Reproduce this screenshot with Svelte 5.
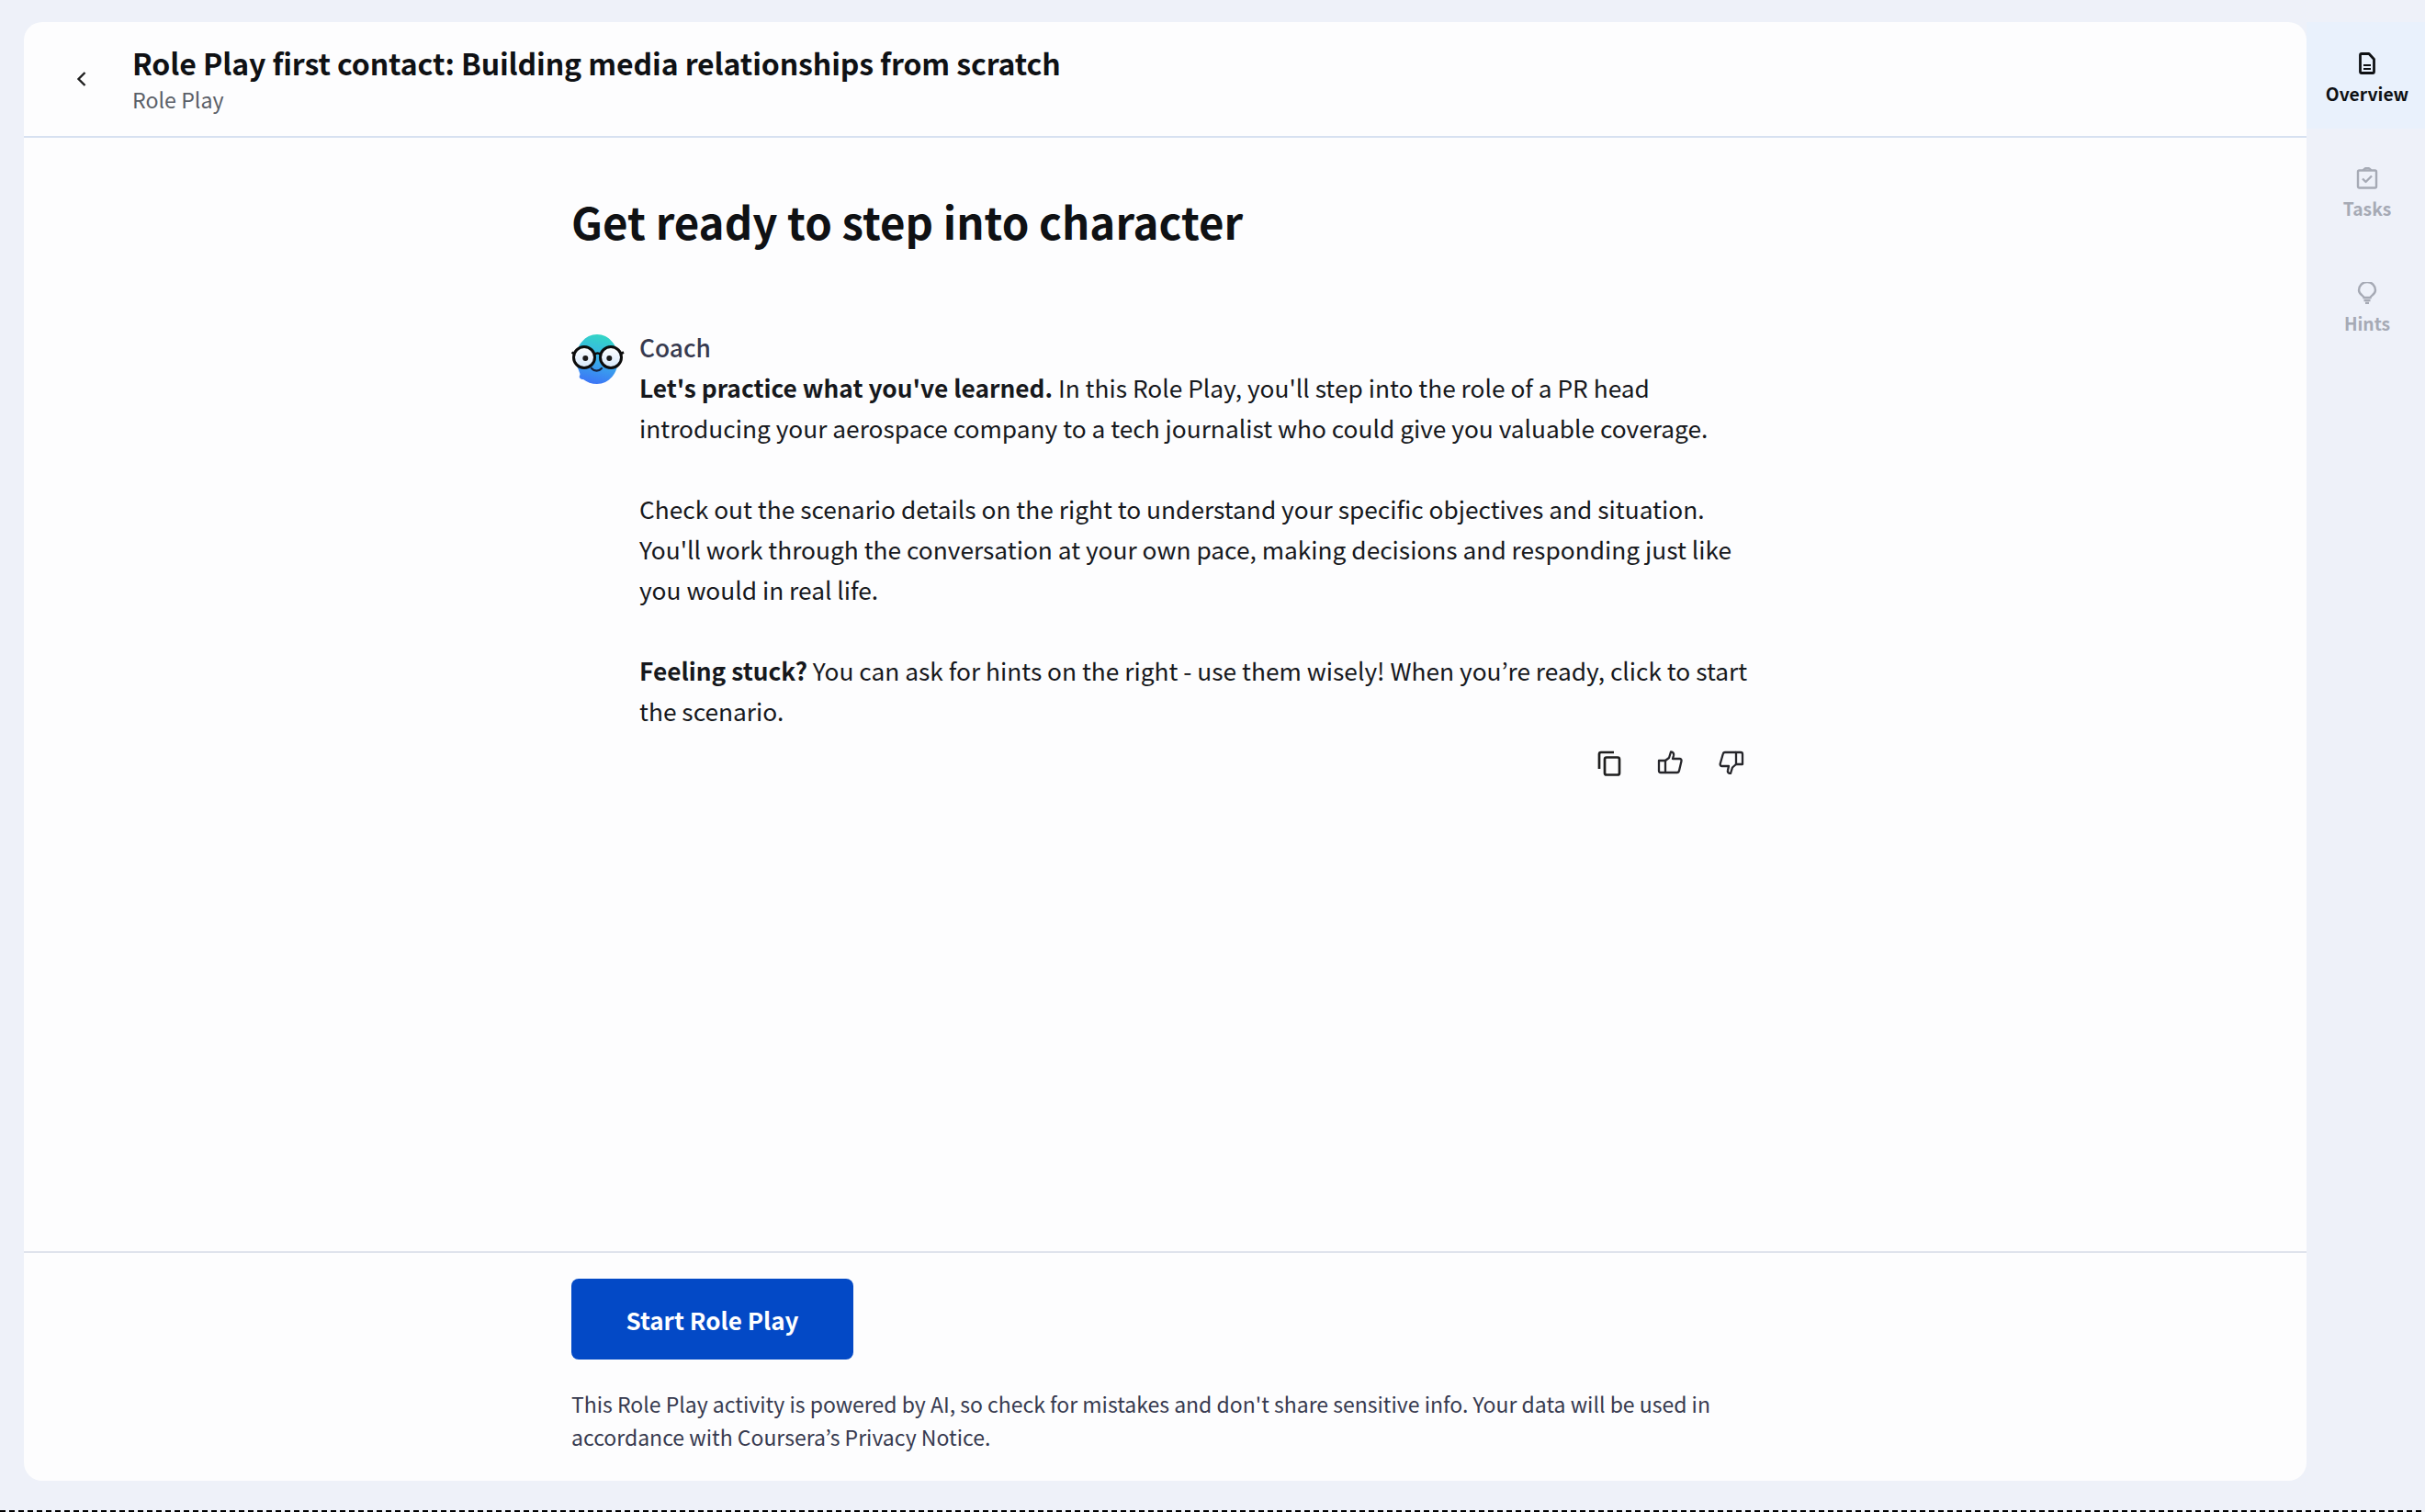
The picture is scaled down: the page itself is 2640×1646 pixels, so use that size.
<script>
  const tabs = [
    { id: "overview", label: "Overview", active: true },
    { id: "tasks", label: "Tasks", active: false },
    { id: "hints", label: "Hints", active: false }
  ];
</script>

<div class="page">
  <div class="shell">
    <div class="card">
      <header class="top">
        <button class="back" aria-label="Back">
          <svg width="24" height="24" viewBox="0 0 24 24" fill="none" stroke="#1f1f1f" stroke-width="2.4">
            <path d="M15.500 5l-7 7 7 7" />
          </svg>
        </button>
        <div class="titles">
          <h1>Role Play first contact: Building media relationships from scratch</h1>
          <div class="sub">Role Play</div>
        </div>
      </header>

      <main class="content">
        <div class="column">
          <h2>Get ready to step into character</h2>
          <div class="message">
            <svg class="avatar" width="58" height="54" viewBox="0 0 58 54">
              <defs>
                <linearGradient id="face" x1="0.6" y1="0" x2="0.4" y2="1">
                  <stop offset="0" stop-color="#33d6c4" />
                  <stop offset="0.5" stop-color="#38b0ea" />
                  <stop offset="1" stop-color="#3c74f6" />
                </linearGradient>
                <linearGradient id="lens" x1="0" y1="0" x2="0" y2="1">
                  <stop offset="0" stop-color="#ffffff" />
                  <stop offset="1" stop-color="#d6e8fb" />
                </linearGradient>
              </defs>
              <path d="M28 0c13 0 23 12 23 27S41 54 28 54c-6 0-11-2-15-5-3 0-5-2-4-4 1-2 0-3-1-6-2-4-3-8-3-12C5 12 15 0 28 0z" fill="url(#face)" />
              <circle cx="14" cy="25" r="11.500" fill="url(#lens)" stroke="#0c0c0c" stroke-width="3" />
              <circle cx="43" cy="25" r="11.500" fill="url(#lens)" stroke="#0c0c0c" stroke-width="3" />
              <path d="M25 22c2-2 5-2 7 0M3 21L.5 19.500M54 21l3-1.500" stroke="#0c0c0c" stroke-width="2.600" fill="none" />
              <circle cx="15.300" cy="26" r="3" fill="#1a1a1a" />
              <circle cx="41.300" cy="26" r="3" fill="#1a1a1a" />
              <path d="M22 37c3 3.500 8 3.500 11 0" stroke="#15233f" stroke-width="2.200" fill="none" stroke-linecap="round" />
            </svg>
            <div class="bubble">
              <div class="who">Coach</div>
              <p><strong>Let's practice what you've learned.</strong> In this Role Play, you'll step into the role of a PR head introducing your aerospace company to a tech journalist who could give you valuable coverage.</p>
              <p>Check out the scenario details on the right to understand your specific objectives and situation. You'll work through the conversation at your own pace, making decisions and responding just like you would in real life.</p>
              <p><strong>Feeling stuck?</strong> You can ask for hints on the right - use them wisely! When you’re ready, click to start the scenario.</p>
              <div class="actions">
                <button aria-label="Copy">
                  <svg width="26" height="28" viewBox="0 0 26 28" fill="none" stroke="#1f1f1f" stroke-width="2.700">
                    <path d="M18 2H4a2 2 0 0 0-2 2v16" />
                    <rect x="8" y="7.500" width="16" height="19" rx="2" />
                  </svg>
                </button>
                <button aria-label="Thumbs up">
                  <svg width="28" height="26" viewBox="0 0 28 26" fill="none" stroke="#26262b" stroke-width="2.300" stroke-linejoin="round">
                    <path d="M2 11h7v13H4a2 2 0 0 1-2-2z" />
                    <path d="M9 11l4-3 2-6.500c2.500 0 3.500 2 3 4L17 9h7.500c1.500 0 2.300 1.200 2 2.500L24 22c-.3 1.300-1 2-2.200 2H9" />
                  </svg>
                </button>
                <button aria-label="Thumbs down">
                  <svg width="28" height="26" viewBox="0 0 28 26" fill="none" stroke="#26262b" stroke-width="2.300" stroke-linejoin="round">
                    <path d="M26 15h-7V2h5a2 2 0 0 1 2 2z" />
                    <path d="M19 2H7C5.800 2 5 2.700 4.700 4L1.700 14.500C1.400 15.800 2.200 17 3.700 17H11l-1 4.500c-.5 2 .5 3.500 3 3.500l2-6.500 4-3.500" />
                  </svg>
                </button>
              </div>
            </div>
          </div>
        </div>
      </main>

      <footer class="bottom">
        <div class="column">
          <button class="start">Start Role Play</button>
          <p class="note">This Role Play activity is powered by AI, so check for mistakes and don't share sensitive info. Your data will be used in accordance with Coursera’s Privacy Notice.</p>
        </div>
      </footer>
    </div>

    <nav class="side">
      {#each tabs as tab}
        <button class="tab" class:active={tab.active}>
          {#if tab.id === "overview"}
            <svg width="24" height="24" viewBox="0 0 24 24" fill="none" stroke="currentColor" stroke-width="2.800" stroke-linejoin="round">
              <path d="M4.500 3a1.500 1.500 0 0 1 1.500-1.500h8L19.500 7.500V21a1.500 1.500 0 0 1-1.500 1.500H6A1.500 1.500 0 0 1 4.500 21z" />
              <path d="M8 14h8M8 18h8" stroke-width="2" />
            </svg>
          {:else if tab.id === "tasks"}
            <svg width="24" height="24" viewBox="0 0 24 24" fill="none" stroke="currentColor" stroke-width="2.400" stroke-linejoin="round">
              <rect x="2" y="3.500" width="20" height="19" rx="1.500" />
              <path d="M8 3.500c0-1.500 2-2.500 4-2.500s4 1 4 2.500M7 12.500l3.500 3.500L17 9.500" />
            </svg>
          {:else}
            <svg width="24" height="24" viewBox="0 0 24 24" fill="none" stroke="currentColor" stroke-width="2.400">
              <path d="M8.500 17c0-2-5.500-3.500-5.500-8a9 9 0 0 1 18 0c0 4.500-5.500 6-5.500 8z" />
              <path d="M8.500 20h7M10 23h4" />
            </svg>
          {/if}
          <span>{tab.label}</span>
        </button>
      {/each}
    </nav>
  </div>
  <div class="dashes"></div>
</div>

<style>
  :global(body) {
    margin: 0;
    background: #eef1f9;
  }

  .page {
    width: 2640px;
    height: 1646px;
    display: flex;
    flex-direction: column;
    font-family: "Noto Sans CJK JP", "Noto Sans", sans-serif;
    background: #eef1f9;
    overflow: hidden;
  }

  .shell {
    flex: 1;
    display: flex;
    padding: 24px 0 32px 26px;
    min-height: 0;
  }

  .card {
    width: 2485px;
    display: flex;
    flex-direction: column;
    background: #fdfdfe;
    border-radius: 20px;
    overflow: hidden;
  }

  .top {
    height: 126px;
    box-sizing: border-box;
    border-bottom: 2px solid #d7e1f1;
    display: flex;
    align-items: center;
  }

  .back {
    width: 118px;
    display: flex;
    justify-content: center;
    padding: 0 0 0 8px;
    border: 0;
    background: none;
  }

  .titles {
    display: flex;
    flex-direction: column;
  }

  h1 {
    margin: 0;
    font-size: 32px;
    letter-spacing: -0.1px;
    line-height: 43px;
    font-weight: 700;
    color: #0f1114;
  }

  .sub {
    font-size: 23.200px;
    line-height: 36px;
    color: #5b6068;
  }

  .content {
    flex: 1;
    display: flex;
    min-height: 0;
  }

  .column {
    width: 1290px;
    margin-left: 596px;
  }

  h2 {
    margin: 0;
    padding-top: 56px;
    font-size: 47.400px;
    line-height: 70px;
    font-weight: 700;
    color: #0f1114;
  }

  .message {
    display: flex;
    gap: 16px;
    margin-top: 80px;
  }

  .avatar {
    flex: none;
    margin-top: 8px;
  }

  .bubble {
    width: 1210px;
  }

  .who {
    font-size: 26.300px;
    line-height: 44px;
    font-weight: 500;
    color: #373a4f;
  }

  .bubble p {
    margin: 0 0 44px;
    font-size: 26.300px;
    line-height: 44px;
    color: #16181c;
  }

  .bubble p:last-of-type {
    margin-bottom: 0;
  }

  strong {
    font-weight: 700;
  }

  .actions {
    display: flex;
    justify-content: flex-end;
    gap: 39px;
    padding: 21px 7px 0 0;
  }

  .actions button {
    height: 28px;
    padding: 0;
    border: 0;
    background: none;
    display: flex;
  }

  .bottom {
    border-top: 2px solid #dfe3ec;
    height: 250px;
    box-sizing: border-box;
  }

  .start {
    display: block;
    margin-top: 28px;
    width: 307px;
    height: 88px;
    border: 0;
    border-radius: 8px;
    background: #0349c6;
    color: #fff;
    font-family: inherit;
    font-size: 26px;
    font-weight: 700;
  }

  .note {
    margin: 30px 0 0;
    width: 1290px;
    font-size: 23px;
    line-height: 36px;
    color: #373a4f;
  }

  .side {
    flex: 1;
    display: flex;
    flex-direction: column;
    gap: 9px;
  }

  .tab {
    height: 116px;
    padding: 33px 0 0 3px;
    border: 0;
    background: none;
    display: flex;
    flex-direction: column;
    align-items: center;
    font-family: inherit;
    font-size: 19.300px;
    line-height: 32px;
    font-weight: 700;
    color: #a6aab5;
  }

  .tab svg {
    margin-bottom: 5px;
  }

  .tab.active {
    background: #e9f1fc;
    color: #0f1114;
  }

  .dashes {
    height: 2px;
    background: repeating-linear-gradient(90deg, #000 0 6px, transparent 6px 10px);
  }
</style>
